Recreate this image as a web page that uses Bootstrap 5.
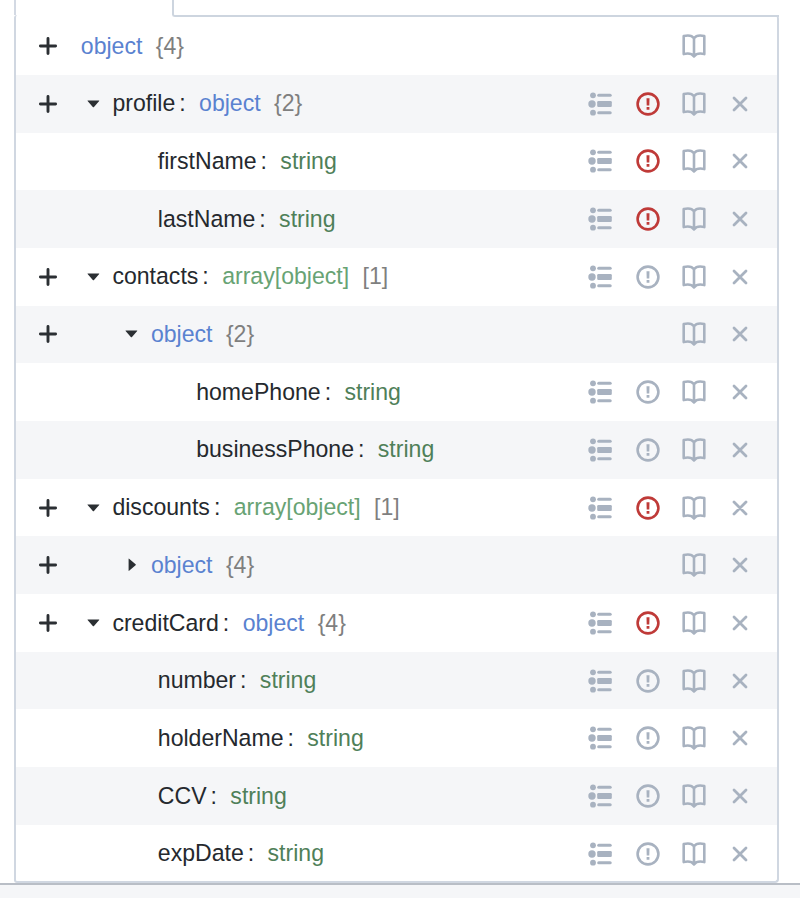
<!DOCTYPE html>
<html lang="en">
<head>
<meta charset="utf-8">
<meta name="viewport" content="width=device-width, initial-scale=1">
<title>Schema editor</title>
<link href="https://cdn.jsdelivr.net/npm/bootstrap@5.3.0/dist/css/bootstrap.min.css" rel="stylesheet">
<style>
  body { font-family: "Liberation Sans", Arial, sans-serif; font-size: 23.08px; line-height: 1.2; color: #25292e; background: #f5f6f8; height: 898px; overflow: hidden; }
  .editor { height: 885px; border-bottom: 2px solid #b9bec6; padding: 0 21.5px 0 13.5px; }
  .tabs { height: 15px; }
  .tab-active { width: 158.3px; border-left: 2px solid #d3d9e3; }
  .tab-rest { height: 17px; border-left: 2px solid #cdd5df; border-bottom: 2px solid #cdd5df; border-radius: 0 4px 0 3px; }
  .tree { height: 868px; border: 2px solid #d0d7e1; border-top: 0; border-radius: 3px 4px 4px 3px; padding-top: 2.3px; }
  .node { height: 57.68px; padding-right: 24.3px; }
  .node:nth-child(even) { background: #f5f6f8; }
  .add { width: 65.3px; }
  .lv1 { margin-left: 5px; }
  .lv2 { margin-left: 43.5px; }
  .caret { width: 15px; margin-right: 11.6px; }
  .leaf1 { margin-left: 77px; }
  .leaf2 { margin-left: 115.4px; }
  .colon { margin: 0 13.4px 0 4px; }
  .t-obj { color: #5a82d0; }
  .t-arr { color: #68a374; }
  .t-str { color: #4f8059; }
  .count { color: #7f7f7f; margin-left: 13.4px; }
  .label { padding-top: 1px; white-space: pre; }
  .tools { gap: 22.2px; color: #a8b2c0; }
  .tools .enumr { margin-right: 1.6px; }
  .tools .required { color: #bf3a38; }
  svg { display: block; flex: none; }
</style>
<script src="https://cdn.jsdelivr.net/npm/bootstrap@5.3.0/dist/js/bootstrap.bundle.min.js"></script>
</head>
<body>
<svg class="d-none" xmlns="http://www.w3.org/2000/svg">
  <symbol id="plus" viewBox="0 0 24 24"><path d="M12 4.4v15.2M4.4 12h15.2" fill="none" stroke="#2b2f33" stroke-width="2.9" stroke-linecap="round"/></symbol>
  <symbol id="down" viewBox="0 0 15 24"><path d="M1.8 8.4h11.2q.5 0 .2.5l-5.2 6q-.6.6-1.2 0l-5.2-6q-.3-.5.2-.5z" fill="#2b2f33"/></symbol>
  <symbol id="right" viewBox="0 0 15 24"><path d="M4.6 5.9v11.7q0 .6.5.2l6.5-5.5q.6-.5 0-1L5.1 5.7q-.5-.4-.5.2z" fill="#2b2f33"/></symbol>
  <symbol id="list" viewBox="0 0 24 24"><g fill="currentColor"><circle cx="5" cy="3.3" r="2.9"/><circle cx="4" cy="12" r="3.7"/><circle cx="5" cy="20.7" r="2.9"/><rect x="9.2" y="1.8" width="14.5" height="3" rx="1.5"/><rect x="9.2" y="9.1" width="14.6" height="5.8" rx="1.2"/><rect x="9.2" y="19.2" width="14.5" height="3" rx="1.5"/></g></symbol>
  <symbol id="alert" viewBox="0 0 24 24"><circle cx="12" cy="12" r="10.4" fill="none" stroke="currentColor" stroke-width="2.6"/><path d="M10.5 6.2h3l-.2 7.3h-2.6zM10.6 15h2.8v2.8h-2.8z" fill="currentColor"/></symbol>
  <symbol id="book" viewBox="0 0 24 24"><path d="M12 4.4C10.4 2 6.6.9 1.7 2.1v18C6.6 18.9 10 19.8 12 22.4c2-2.6 5.4-3.5 10.3-2.3v-18C17.4.9 13.6 2 12 4.4zM12 4.4v18" fill="none" stroke="currentColor" stroke-width="2.6" stroke-linejoin="round"/></symbol>
  <symbol id="cross" viewBox="0 0 24 24"><path d="M6 6l12 12M18 6L6 18" fill="none" stroke="currentColor" stroke-width="2.8" stroke-linecap="round"/></symbol>
</svg>

<main class="editor bg-white">
  <div class="tabs d-flex">
    <div class="tab-active flex-shrink-0"></div>
    <div class="tab-rest flex-grow-1"></div>
  </div>
  <div class="tree">
    <div class="node d-flex align-items-center">
      <div class="add d-flex"><svg class="ms-auto me-auto" width="24" height="24"><use href="#plus"/></svg></div>
      <div class="label"><span class="t-obj">object</span><span class="count">{4}</span></div>
      <div class="tools d-flex ms-auto"><svg width="24" height="24"><use href="#book"/></svg><svg class="invisible" width="24" height="24"><use href="#cross"/></svg></div>
    </div>
    <div class="node d-flex align-items-center">
      <div class="add d-flex"><svg class="ms-auto me-auto" width="24" height="24"><use href="#plus"/></svg></div>
      <svg class="caret lv1" height="24"><use href="#down"/></svg>
      <div class="label">profile<span class="colon">:</span><span class="t-obj">object</span><span class="count">{2}</span></div>
      <div class="tools d-flex ms-auto"><svg class="enumr" width="24" height="24"><use href="#list"/></svg><svg class="required" width="24" height="24"><use href="#alert"/></svg><svg width="24" height="24"><use href="#book"/></svg><svg width="24" height="24"><use href="#cross"/></svg></div>
    </div>
    <div class="node d-flex align-items-center">
      <div class="add"></div>
      <div class="label leaf1">firstName<span class="colon">:</span><span class="t-str">string</span></div>
      <div class="tools d-flex ms-auto"><svg class="enumr" width="24" height="24"><use href="#list"/></svg><svg class="required" width="24" height="24"><use href="#alert"/></svg><svg width="24" height="24"><use href="#book"/></svg><svg width="24" height="24"><use href="#cross"/></svg></div>
    </div>
    <div class="node d-flex align-items-center">
      <div class="add"></div>
      <div class="label leaf1">lastName<span class="colon">:</span><span class="t-str">string</span></div>
      <div class="tools d-flex ms-auto"><svg class="enumr" width="24" height="24"><use href="#list"/></svg><svg class="required" width="24" height="24"><use href="#alert"/></svg><svg width="24" height="24"><use href="#book"/></svg><svg width="24" height="24"><use href="#cross"/></svg></div>
    </div>
    <div class="node d-flex align-items-center">
      <div class="add d-flex"><svg class="ms-auto me-auto" width="24" height="24"><use href="#plus"/></svg></div>
      <svg class="caret lv1" height="24"><use href="#down"/></svg>
      <div class="label">contacts<span class="colon">:</span><span class="t-arr">array[object]</span><span class="count">[1]</span></div>
      <div class="tools d-flex ms-auto"><svg class="enumr" width="24" height="24"><use href="#list"/></svg><svg width="24" height="24"><use href="#alert"/></svg><svg width="24" height="24"><use href="#book"/></svg><svg width="24" height="24"><use href="#cross"/></svg></div>
    </div>
    <div class="node d-flex align-items-center">
      <div class="add d-flex"><svg class="ms-auto me-auto" width="24" height="24"><use href="#plus"/></svg></div>
      <svg class="caret lv2" height="24"><use href="#down"/></svg>
      <div class="label"><span class="t-obj">object</span><span class="count">{2}</span></div>
      <div class="tools d-flex ms-auto"><svg width="24" height="24"><use href="#book"/></svg><svg width="24" height="24"><use href="#cross"/></svg></div>
    </div>
    <div class="node d-flex align-items-center">
      <div class="add"></div>
      <div class="label leaf2">homePhone<span class="colon">:</span><span class="t-str">string</span></div>
      <div class="tools d-flex ms-auto"><svg class="enumr" width="24" height="24"><use href="#list"/></svg><svg width="24" height="24"><use href="#alert"/></svg><svg width="24" height="24"><use href="#book"/></svg><svg width="24" height="24"><use href="#cross"/></svg></div>
    </div>
    <div class="node d-flex align-items-center">
      <div class="add"></div>
      <div class="label leaf2">businessPhone<span class="colon">:</span><span class="t-str">string</span></div>
      <div class="tools d-flex ms-auto"><svg class="enumr" width="24" height="24"><use href="#list"/></svg><svg width="24" height="24"><use href="#alert"/></svg><svg width="24" height="24"><use href="#book"/></svg><svg width="24" height="24"><use href="#cross"/></svg></div>
    </div>
    <div class="node d-flex align-items-center">
      <div class="add d-flex"><svg class="ms-auto me-auto" width="24" height="24"><use href="#plus"/></svg></div>
      <svg class="caret lv1" height="24"><use href="#down"/></svg>
      <div class="label">discounts<span class="colon">:</span><span class="t-arr">array[object]</span><span class="count">[1]</span></div>
      <div class="tools d-flex ms-auto"><svg class="enumr" width="24" height="24"><use href="#list"/></svg><svg class="required" width="24" height="24"><use href="#alert"/></svg><svg width="24" height="24"><use href="#book"/></svg><svg width="24" height="24"><use href="#cross"/></svg></div>
    </div>
    <div class="node d-flex align-items-center">
      <div class="add d-flex"><svg class="ms-auto me-auto" width="24" height="24"><use href="#plus"/></svg></div>
      <svg class="caret lv2" height="24"><use href="#right"/></svg>
      <div class="label"><span class="t-obj">object</span><span class="count">{4}</span></div>
      <div class="tools d-flex ms-auto"><svg width="24" height="24"><use href="#book"/></svg><svg width="24" height="24"><use href="#cross"/></svg></div>
    </div>
    <div class="node d-flex align-items-center">
      <div class="add d-flex"><svg class="ms-auto me-auto" width="24" height="24"><use href="#plus"/></svg></div>
      <svg class="caret lv1" height="24"><use href="#down"/></svg>
      <div class="label">creditCard<span class="colon">:</span><span class="t-obj">object</span><span class="count">{4}</span></div>
      <div class="tools d-flex ms-auto"><svg class="enumr" width="24" height="24"><use href="#list"/></svg><svg class="required" width="24" height="24"><use href="#alert"/></svg><svg width="24" height="24"><use href="#book"/></svg><svg width="24" height="24"><use href="#cross"/></svg></div>
    </div>
    <div class="node d-flex align-items-center">
      <div class="add"></div>
      <div class="label leaf1">number<span class="colon">:</span><span class="t-str">string</span></div>
      <div class="tools d-flex ms-auto"><svg class="enumr" width="24" height="24"><use href="#list"/></svg><svg width="24" height="24"><use href="#alert"/></svg><svg width="24" height="24"><use href="#book"/></svg><svg width="24" height="24"><use href="#cross"/></svg></div>
    </div>
    <div class="node d-flex align-items-center">
      <div class="add"></div>
      <div class="label leaf1">holderName<span class="colon">:</span><span class="t-str">string</span></div>
      <div class="tools d-flex ms-auto"><svg class="enumr" width="24" height="24"><use href="#list"/></svg><svg width="24" height="24"><use href="#alert"/></svg><svg width="24" height="24"><use href="#book"/></svg><svg width="24" height="24"><use href="#cross"/></svg></div>
    </div>
    <div class="node d-flex align-items-center">
      <div class="add"></div>
      <div class="label leaf1">CCV<span class="colon">:</span><span class="t-str">string</span></div>
      <div class="tools d-flex ms-auto"><svg class="enumr" width="24" height="24"><use href="#list"/></svg><svg width="24" height="24"><use href="#alert"/></svg><svg width="24" height="24"><use href="#book"/></svg><svg width="24" height="24"><use href="#cross"/></svg></div>
    </div>
    <div class="node d-flex align-items-center">
      <div class="add"></div>
      <div class="label leaf1">expDate<span class="colon">:</span><span class="t-str">string</span></div>
      <div class="tools d-flex ms-auto"><svg class="enumr" width="24" height="24"><use href="#list"/></svg><svg width="24" height="24"><use href="#alert"/></svg><svg width="24" height="24"><use href="#book"/></svg><svg width="24" height="24"><use href="#cross"/></svg></div>
    </div>
  </div>
</main>
</body>
</html>
